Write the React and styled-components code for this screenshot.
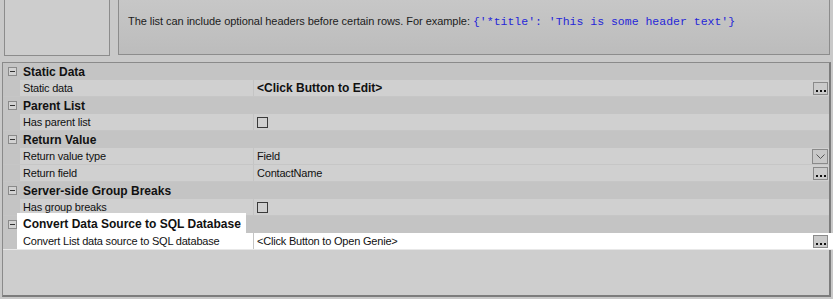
import styled, { createGlobalStyle } from "styled-components";

const Global = createGlobalStyle`
  html, body {
    margin: 0;
    padding: 0;
    background: #c9c9c9;
    font-family: "Liberation Sans", Arial, sans-serif;
    font-size: 11px;
    color: #111;
  }
`;

const Page = styled.div`
  width: 833px;
  height: 299px;
  overflow: hidden;
  background: #c9c9c9;
`;

const TopArea = styled.div`
  display: flex;
  gap: 8px;
  padding: 0 3px 0 4px;
  height: 56px;
`;

const ThumbBox = styled.div`
  width: 104px;
  height: 55px;
  background: #cdcdcd;
  border: 1px solid #8c8c8c;
  border-top: none;
`;

const HelpBox = styled.div`
  flex: 1;
  height: 55px;
  border: 1px solid #8c8c8c;
  border-top: none;
  background: linear-gradient(#c7c7c7, #bcbcbc);
  padding: 15px 0 0 9px;
  box-sizing: border-box;
  font-size: 11px;
  letter-spacing: -0.05px;
  color: #1c1c1c;
`;

const Code = styled.span`
  font-family: "Liberation Mono", "Courier New", monospace;
  font-size: 11.5px;
  letter-spacing: 0;
  color: #2626d8;
  margin-left: 3px;
`;

const Grid = styled.div`
  margin: 6px 2px 0 2px;
  height: 232px;
  border: 1px solid #8a8a8a;
  border-right: 2px solid #7c7c7c;
  border-bottom: 2px solid #7c7c7c;
  background: #cecece;
  position: relative;
`;

const CategoryRow = styled.div`
  display: flex;
  height: 17px;
  background: #c4c4c4;
  align-items: center;
`;

const Gutter = styled.div`
  width: 17px;
  height: 100%;
  flex: none;
  display: flex;
  align-items: center;
  justify-content: center;
  background: #c4c4c4;
`;

const Minus = styled.div`
  width: 7px;
  height: 7px;
  border: 1px solid #8a8a8a;
  background: #d2d2d2;
  position: relative;
  margin-left: 2px;

  &::after {
    content: "";
    position: absolute;
    left: 1px;
    right: 1px;
    top: 3px;
    height: 1px;
    background: #333;
  }
`;

const CategoryLabel = styled.div`
  font-weight: bold;
  font-size: 12px;
  color: #111;
  padding-left: 3px;
  height: 100%;
  display: flex;
  align-items: center;
  ${(p) =>
    p.$hl &&
    `
    background: #fff;
    margin-left: -3px;
    padding-left: 6px;
    padding-right: 5px;
    height: 20px;
    margin-top: -3px;
    align-items: flex-end;
    padding-bottom: 2px;
    box-sizing: border-box;
  `}
`;

const PropRow = styled.div`
  display: flex;
  height: 17px;
  box-sizing: border-box;
  border-bottom: 1px solid #c6c6c6;
  background: ${(p) => (p.$hl ? "#fff" : "#d0d0d0")};
  letter-spacing: -0.2px;
  ${(p) => p.$hl && "margin-right: -4px; border-bottom-color: #e8e8e8;"}
`;

const NameCell = styled.div`
  width: 230px;
  flex: none;
  padding-left: 3px;
  display: flex;
  align-items: center;
  border-right: 1px solid #c4c4c4;
  ${(p) => p.$hl && "background: #fff; margin-left: -3px; padding-left: 6px;"}
`;

const ValueCell = styled.div`
  flex: 1;
  display: flex;
  align-items: center;
  padding-left: 3px;
  font-weight: ${(p) => (p.$bold ? "bold" : "normal")};
  font-size: ${(p) => (p.$bold ? "12px" : "11px")};
  letter-spacing: ${(p) => (p.$bold ? "0" : "-0.2px")};
`;

const Check = styled.div`
  width: 11px;
  height: 11px;
  border: 1px solid #3a3a3a;
  box-sizing: border-box;
  margin-top: 1px;
`;

const BtnSlot = styled.div`
  display: flex;
  align-items: center;
`;

const EllipsisBtn = styled.div`
  width: 15px;
  height: 13px;
  box-sizing: border-box;
  border: 1px solid #8a8a8a;
  background: #cbcbcb;
  margin-right: ${(p) => (p.$hl ? "5px" : "1px")};
  display: flex;
  align-items: flex-end;
  justify-content: center;
  gap: 2px;
  padding-bottom: 2px;

  span {
    width: 2px;
    height: 2px;
    background: #111;
  }
`;

const DropBtn = styled.div`
  width: 16px;
  height: 15px;
  box-sizing: border-box;
  border: 1px solid #8a8a8a;
  background: #c8c8c8;
  margin-right: 1px;
  display: flex;
  align-items: center;
  justify-content: center;
`;

const Dots = ({ hl }) => (
  <EllipsisBtn $hl={hl}>
    <span />
    <span />
    <span />
  </EllipsisBtn>
);

const sections = [
  {
    title: "Static Data",
    rows: [{ name: "Static data", value: "<Click Button to Edit>", bold: true, btn: "dots" }],
  },
  { title: "Parent List", rows: [{ name: "Has parent list", check: true }] },
  {
    title: "Return Value",
    rows: [
      { name: "Return value type", value: "Field", btn: "drop" },
      { name: "Return field", value: "ContactName", btn: "dots" },
    ],
  },
  { title: "Server-side Group Breaks", rows: [{ name: "Has group breaks", check: true }] },
  {
    title: "Convert Data Source to SQL Database",
    hl: true,
    rows: [
      {
        name: "Convert List data source to SQL database",
        value: "<Click Button to Open Genie>",
        btn: "dots",
        hl: true,
      },
    ],
  },
];

export default function App() {
  return (
    <Page>
      <Global />
      <TopArea>
        <ThumbBox />
        <HelpBox>
          The list can include optional headers before certain rows. For example:
          <Code>{"{'*title': 'This is some header text'}"}</Code>
        </HelpBox>
      </TopArea>
      <Grid>
        {sections.map((s) => (
          <div key={s.title}>
            <CategoryRow>
              <Gutter>
                <Minus />
              </Gutter>
              <CategoryLabel $hl={s.hl}>{s.title}</CategoryLabel>
            </CategoryRow>
            {s.rows.map((r) => (
              <PropRow key={r.name} $hl={r.hl}>
                <Gutter />
                <NameCell $hl={r.hl}>{r.name}</NameCell>
                <ValueCell $bold={r.bold}>
                  {r.check ? <Check /> : r.value}
                </ValueCell>
                {r.btn === "dots" && (
                  <BtnSlot>
                    <Dots hl={r.hl} />
                  </BtnSlot>
                )}
                {r.btn === "drop" && (
                  <BtnSlot>
                    <DropBtn>
                      <svg width="9" height="5" viewBox="0 0 9 5">
                        <path d="M0.5 0.5 L4.5 4.5 L8.5 0.5" fill="none" stroke="#555" strokeWidth="1" />
                      </svg>
                    </DropBtn>
                  </BtnSlot>
                )}
              </PropRow>
            ))}
          </div>
        ))}
      </Grid>
    </Page>
  );
}
